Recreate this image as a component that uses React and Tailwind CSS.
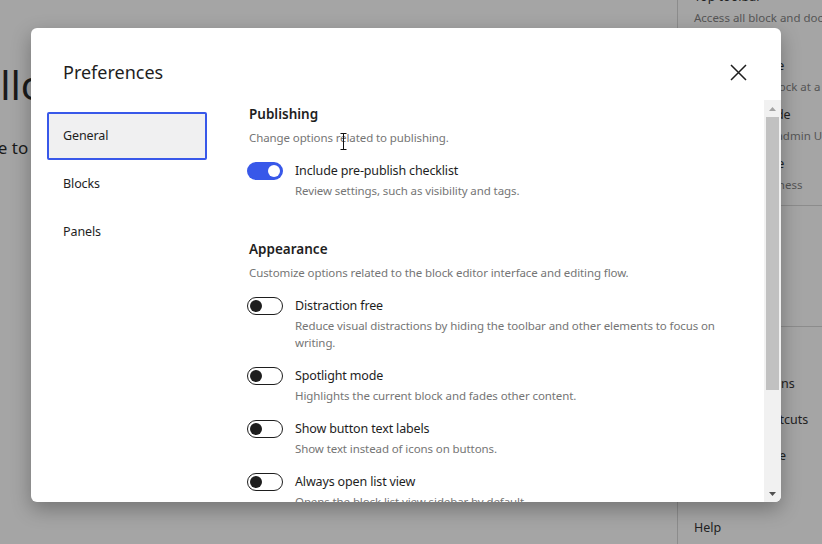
import React from "react";

const Toggle = ({ on }) =>
    on ? (
        <div className="flex h-[18px] w-[36px] shrink-0 items-center justify-end rounded-full bg-[#3858e9] pr-[3px]">
            <div className="h-[12px] w-[12px] rounded-full bg-white" />
        </div>
    ) : (
        <div className="flex h-[18px] w-[36px] shrink-0 items-center rounded-full border border-[#1e1e1e] bg-white pl-[2px]">
            <div className="h-[12px] w-[12px] rounded-full bg-[#1e1e1e]" />
        </div>
    );

const Option = ({ on, label, help }) => (
    <div className="flex gap-3">
        <Toggle on={on} />
        <div className="pr-4">
            <div className="text-[12.5px] leading-[18px] tracking-[-0.15px] text-[#1e1e1e]">{label}</div>
            <div className="mt-[2px] text-[11.5px] leading-[17px] tracking-[-0.1px] text-[#757575]">{help}</div>
        </div>
    </div>
);

const Section = ({ title, description, children }) => (
    <div>
        <h2 className="pl-[2px] text-[13.5px] font-semibold leading-[20px] text-[#1e1e1e]">{title}</h2>
        <p className="mt-[5px] pl-[2px] text-[11.5px] leading-[18px] tracking-[-0.1px] text-[#757575]">{description}</p>
        <div className="mt-[15px] flex flex-col gap-[16px]">{children}</div>
    </div>
);

const MenuItem = ({ label, help }) => (
    <div>
        <div className="text-[12.5px] leading-[20px] text-[#222]">{label}</div>
        <div className="mt-[1px] text-[11.5px] leading-[20px] text-[#555]">{help}</div>
    </div>
);

const tabs = ["General", "Blocks", "Panels"];

export default function App() {
    return (
        <div className="relative h-[544px] w-[822px] overflow-hidden bg-[#a5a5a5] font-['Noto_Sans','Open_Sans',sans-serif]">
            {/* page behind the modal */}
            <div className="flex h-full">
                <div className="w-[677px] shrink-0 overflow-hidden pt-[58px]">
                    <div className="ml-[-52px] whitespace-nowrap text-[40px] leading-[54px] text-[#1a1a1a]">Hello world</div>
                    <div className="ml-[-66px] mt-[24px] whitespace-nowrap text-[17px] leading-[24px] text-[#1a1a1a]">Welcome to ‘Hello world’</div>
                </div>
                <div className="w-[290px] shrink-0 border-l border-[#8c8c8c]">
                    <div className="mt-[-13px] flex flex-col gap-[8px] px-4 pb-[10px]">
                        <MenuItem label="Top toolbar" help="Access all block and document tools in a single place" />
                        <MenuItem label="Spotlight mode" help="Focus on one block at a time" />
                        <MenuItem label="Fullscreen mode" help="Show and hide admin UI" />
                        <MenuItem label="Distraction free" help="Write with calmness" />
                    </div>
                    <div className="h-[121px] border-t border-[#8c8c8c] px-4 pt-4">
                        <div className="text-[11px] uppercase leading-[20px] text-[#555]">Editor</div>
                        <div className="mt-4 text-[12.5px] leading-[20px] text-[#222]">Visual editor</div>
                        <div className="mt-4 text-[12.5px] leading-[20px] text-[#222]">Code editor</div>
                    </div>
                    <div className="flex flex-col gap-[16px] border-t border-[#8c8c8c] px-4 pt-[11px] text-[12.5px] leading-[20px] text-[#222]">
                        <div className="text-[11px] uppercase text-[#555]">Tools</div>
                        <div>Manage patterns</div>
                        <div>Keyboard shortcuts</div>
                        <div>Welcome Guide</div>
                        <div>Copy all blocks</div>
                        <div>Help</div>
                    </div>
                </div>
            </div>

            {/* preferences modal */}
            <div className="absolute left-[31px] top-[28px] flex h-[474px] w-[750px] flex-col overflow-hidden rounded-[6px] bg-white shadow-[0_7px_20px_rgba(0,0,0,0.3)]">
                <div className="flex h-[72px] shrink-0 items-start justify-between pl-8 pr-[34px] pt-[30px]">
                    <h1 className="text-[18px] leading-[28px] text-[#1e1e1e]">Preferences</h1>
                    <button className="mt-[6px]">
                        <svg width="17" height="17" viewBox="0 0 17 17" fill="none" stroke="#1e1e1e" strokeWidth="1.5">
                            <path d="M1 1L16 16M16 1L1 16" />
                        </svg>
                    </button>
                </div>
                <div className="flex min-h-0 flex-1">
                    <nav className="w-[176px] shrink-0 pl-4 pt-3">
                        {tabs.map((tab, i) => (
                            <div
                                key={tab}
                                className={
                                    i === 0
                                        ? "flex h-12 items-center rounded-[2px] border-2 border-[#3858e9] bg-[#f0f0f1] pl-[14px] text-[12.5px] tracking-[-0.1px] text-[#1e1e1e]"
                                        : "flex h-12 items-center pl-4 text-[12.5px] tracking-[-0.1px] text-[#1e1e1e]"
                                }
                            >
                                {tab}
                            </div>
                        ))}
                    </nav>
                    <div className="relative min-w-0 flex-1 overflow-hidden pl-10 pr-6 pt-1">
                        <div className="flex flex-col gap-[40px]">
                            <Section title="Publishing" description="Change options related to publishing.">
                                <Option on label="Include pre-publish checklist" help="Review settings, such as visibility and tags." />
                            </Section>
                            <Section title="Appearance" description="Customize options related to the block editor interface and editing flow.">
                                <Option label="Distraction free" help="Reduce visual distractions by hiding the toolbar and other elements to focus on writing." />
                                <Option label="Spotlight mode" help="Highlights the current block and fades other content." />
                                <Option label="Show button text labels" help="Show text instead of icons on buttons." />
                                <Option label="Always open list view" help="Opens the block list view sidebar by default." />
                                <Option label="Use theme styles" help="Make the editor look like your theme." />
                            </Section>
                        </div>
                        {/* text cursor */}
                        <svg className="absolute left-[133px] top-[33px]" width="7" height="17" viewBox="0 0 7 17" fill="none" stroke="#111" strokeWidth="1">
                            <path d="M0.5 0.5H6.5M3.5 0.5V16.5M0.5 16.5H6.5" />
                        </svg>
                    </div>
                    <div className="flex w-[17px] shrink-0 flex-col items-center bg-[#f1f1f1] pr-[1px]">
                        <div className="flex h-[17px] items-center justify-center">
                            <svg width="7" height="4" viewBox="0 0 7 4"><path d="M0 4L3.5 0L7 4Z" fill="#a3a3a3" /></svg>
                        </div>
                        <div className="h-[273px] w-[13px] bg-[#c1c1c1]" />
                        <div className="flex-1" />
                        <div className="flex h-[17px] items-center justify-center">
                            <svg width="7" height="4" viewBox="0 0 7 4"><path d="M0 0L3.5 4L7 0Z" fill="#505050" /></svg>
                        </div>
                    </div>
                </div>
            </div>
        </div>
    );
}
